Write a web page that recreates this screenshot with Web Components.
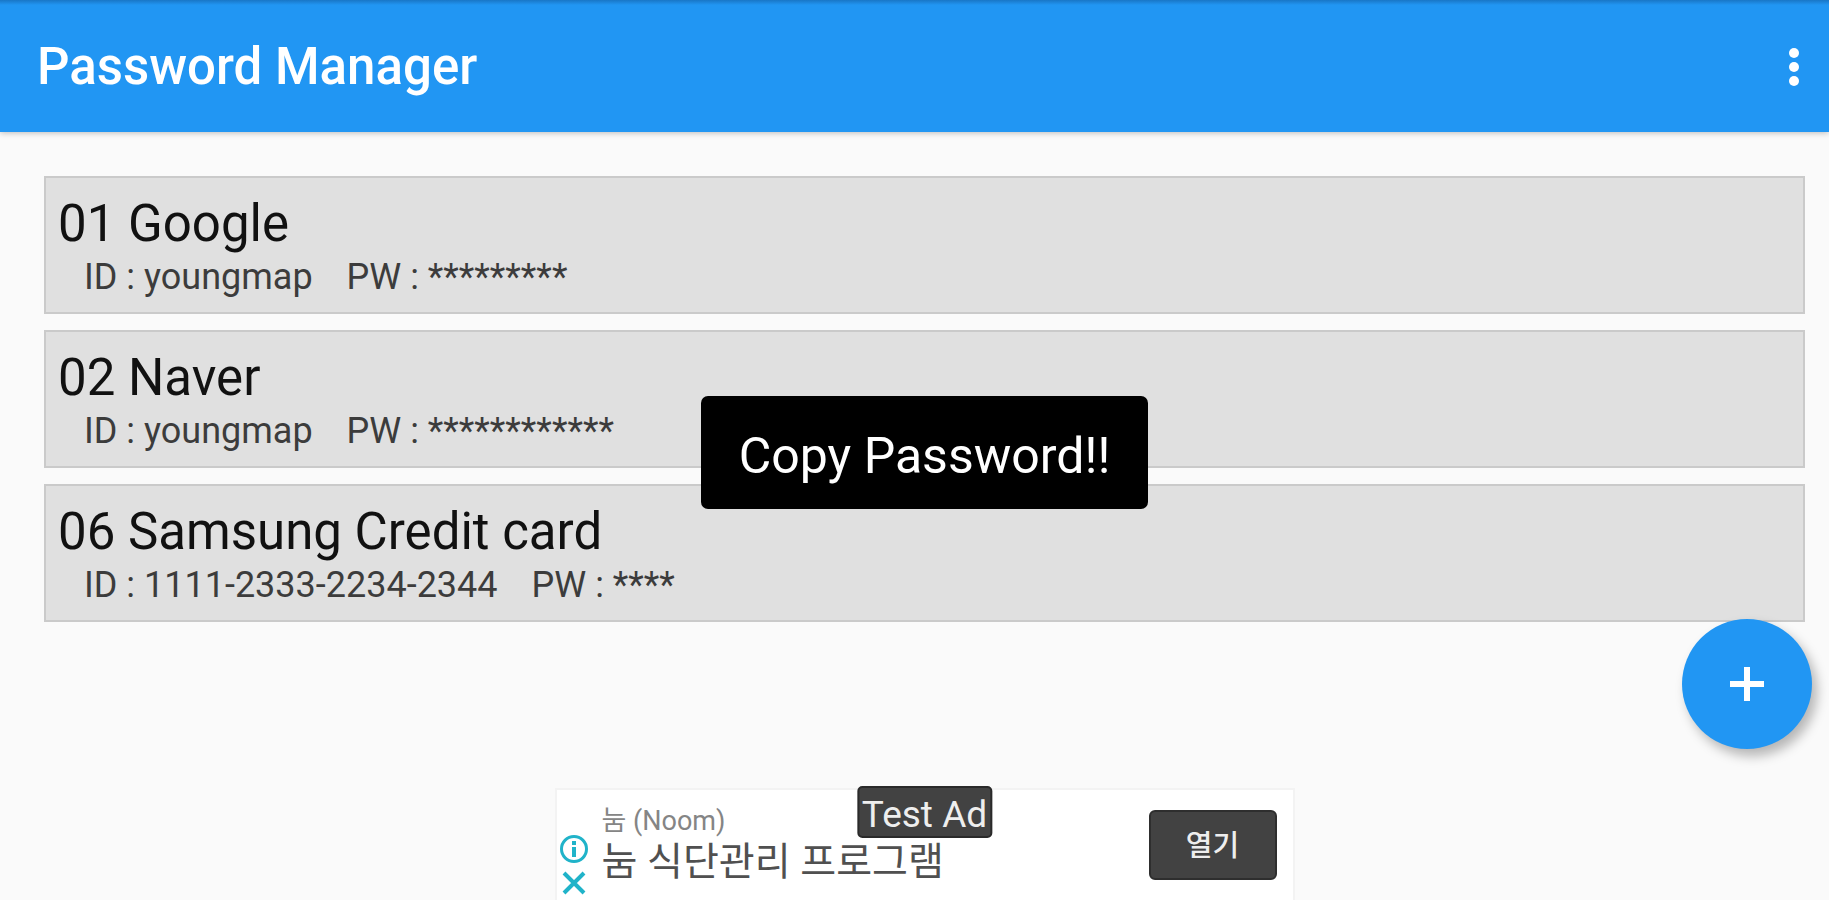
<!DOCTYPE html>
<html lang="ko">
<head>
  <meta charset="utf-8">
  <meta name="viewport" content="width=device-width, initial-scale=1">
  <title>Password Manager</title>
  <style>
    body {
      margin: 0;
      background-color: #fafafa;
      font-family: Roboto, "Noto Sans CJK KR", sans-serif;
    }
  </style>
</head>
<body>
  <pm-app>
    <pm-app-bar slot="bar">Password Manager</pm-app-bar>
    <pm-entry>
      <span slot="title">01 Google</span>
      <span slot="id">youngmap</span>
      <span slot="pw">*********</span>
    </pm-entry>
    <pm-entry>
      <span slot="title">02 Naver</span>
      <span slot="id">youngmap</span>
      <span slot="pw">************</span>
    </pm-entry>
    <pm-entry>
      <span slot="title">06 Samsung Credit card</span>
      <span slot="id">1111-2333-2234-2344</span>
      <span slot="pw">****</span>
    </pm-entry>
    <pm-toast slot="toast">Copy Password!!</pm-toast>
    <pm-ad slot="ad">
      <span slot="brand">눔 (Noom)</span>
      <span slot="headline">눔 식단관리 프로그램</span>
      <span slot="action">열기</span>
    </pm-ad>
    <pm-fab slot="fab"></pm-fab>
  </pm-app>

  <script>
    class App extends HTMLElement {
      constructor() {
        super()
        this.attachShadow({ mode: 'open' })
        this.shadowRoot.innerHTML = /* html */ `
          <style>
            :host {
              display: flex;
              flex-direction: column;
              height: 100vh;
              overflow: hidden;
            }
            main {
              position: relative;
              flex: 1;
              min-height: 0;
              display: flex;
              flex-direction: column;
              gap: 16px;
              padding: 44px 24px 0 44px;
            }
            .toast {
              position: absolute;
              top: 264px;
              left: 44px;
              right: 24px;
              display: flex;
              justify-content: center;
              pointer-events: none;
            }
            footer {
              display: flex;
              justify-content: center;
              padding: 0 24px 0 44px;
            }
            .fab {
              position: fixed;
              right: 17px;
              bottom: 151px;
            }
          </style>
          <slot name="bar"></slot>
          <main>
            <slot></slot>
            <div class="toast"><slot name="toast"></slot></div>
          </main>
          <footer><slot name="ad"></slot></footer>
          <div class="fab"><slot name="fab"></slot></div>
        `;
      }
    }

    class AppBar extends HTMLElement {
      constructor() {
        super()
        this.attachShadow({ mode: 'open' })
        this.shadowRoot.innerHTML = /* html */ `
          <style>
            :host {
              display: block;
              background: linear-gradient(#1976c6, #2196f3 5px);
              box-shadow: 0 1px 6px rgba(0,0,0,0.25);
            }
            header {
              display: flex;
              align-items: center;
              justify-content: space-between;
              height: 130px;
              padding: 2px 17px 0 37px;
            }
            h1 {
              margin: 0;
              font-size: 51px;
              line-height: 60px;
              font-weight: 500;
              color: #fff;
            }
            button {
              display: flex;
              padding: 0;
              border: 0;
              background: none;
              cursor: pointer;
            }
          </style>
          <header>
            <h1><slot></slot></h1>
            <button type="button" aria-label="More options">
              <svg width="36" height="60" viewBox="0 0 36 60" fill="#fff">
                <circle cx="18" cy="16" r="5" />
                <circle cx="18" cy="30" r="5" />
                <circle cx="18" cy="44" r="5" />
              </svg>
            </button>
          </header>
        `;
      }
    }

    class Entry extends HTMLElement {
      constructor() {
        super()
        this.attachShadow({ mode: 'open' })
        this.shadowRoot.innerHTML = /* html */ `
          <style>
            :host {
              display: block;
            }
            article {
              padding: 16px 12px 12px;
              background-color: #e0e0e0;
              border: 2px solid #cacaca;
            }
            h2 {
              margin: 0;
              font-size: 51px;
              line-height: 60px;
              font-weight: 400;
              color: #111;
            }
            p {
              display: flex;
              gap: 34px;
              margin: 0;
              padding-left: 26px;
              font-size: 36px;
              line-height: 46px;
              color: #3c3c3c;
            }
          </style>
          <article>
            <h2><slot name="title"></slot></h2>
            <p>
              <span>ID : <slot name="id"></slot></span>
              <span>PW : <slot name="pw"></slot></span>
            </p>
          </article>
        `;
      }
    }

    class Toast extends HTMLElement {
      constructor() {
        super()
        this.attachShadow({ mode: 'open' })
        this.shadowRoot.innerHTML = /* html */ `
          <style>
            :host {
              display: block;
              padding: 30px 38px 23px;
              border-radius: 7px;
              background-color: #000;
              color: #fff;
              font-size: 50px;
              line-height: 60px;
            }
          </style>
          <div role="status"><slot></slot></div>
        `;
      }
    }

    class Fab extends HTMLElement {
      constructor() {
        super()
        this.attachShadow({ mode: 'open' })
        this.shadowRoot.innerHTML = /* html */ `
          <style>
            :host {
              display: block;
            }
            button {
              display: flex;
              align-items: center;
              justify-content: center;
              width: 130px;
              height: 130px;
              padding: 0;
              border: 0;
              border-radius: 50%;
              background-color: #2196f3;
              box-shadow: 5px 7px 12px rgba(0,0,0,0.28);
              cursor: pointer;
            }
          </style>
          <button type="button" aria-label="Add">
            <svg width="36" height="36" viewBox="0 0 36 36" stroke="#fff" stroke-width="6">
              <path d="M18 1v34M1 18h34" />
            </svg>
          </button>
        `;
      }
    }

    class Ad extends HTMLElement {
      constructor() {
        super()
        this.attachShadow({ mode: 'open' })
        this.shadowRoot.innerHTML = /* html */ `
          <style>
            :host {
              position: relative;
              display: block;
              width: 42%;
              min-width: 740px;
              box-sizing: border-box;
              background-color: #fff;
              border: 2px solid #f3f3f3;
              border-bottom: 0;
            }
            .banner {
              display: flex;
              align-items: flex-start;
              height: 110px;
            }
            .choices {
              display: flex;
              flex-direction: column;
              align-items: center;
              gap: 7px;
              padding: 44px 13px 0 2px;
            }
            .choices button {
              display: flex;
              padding: 0;
              border: 0;
              background: none;
              cursor: pointer;
            }
            .text {
              flex: 1;
              padding-top: 15px;
            }
            .brand {
              margin: 0;
              font-size: 27px;
              line-height: 32px;
              color: #858585;
            }
            .headline {
              margin: 0;
              font-size: 39px;
              line-height: 50px;
              color: #505050;
            }
            .action {
              width: 128px;
              height: 70px;
              margin: 20px 16px 0 0;
              padding: 0 0 4px;
              border: 2px solid #2e2e2e;
              border-radius: 6px;
              background-color: #424242;
              color: #eee;
              font-family: inherit;
              font-size: 29px;
              font-weight: 500;
              cursor: pointer;
            }
            .label {
              position: absolute;
              top: -4px;
              left: 50%;
              transform: translateX(-50%);
              padding: 7px 3px 1px;
              border: 2px solid #2a2a2a;
              border-radius: 5px;
              background-color: #424242;
              color: #eee;
              font-size: 37px;
              line-height: 40px;
              white-space: nowrap;
            }
          </style>
          <div class="banner">
            <div class="choices">
              <button type="button" aria-label="Ad info">
                <svg width="30" height="30" viewBox="0 0 30 30" fill="none" stroke="#20b3c9">
                  <circle cx="15" cy="15" r="12.5" stroke-width="3" />
                  <path d="M15 7v4M15 13v10" stroke-width="4" />
                </svg>
              </button>
              <button type="button" aria-label="Close ad">
                <svg width="24" height="24" viewBox="0 0 24 24" fill="none" stroke="#20b3c9" stroke-width="4">
                  <path d="M2 2l20 20M22 2L2 22" />
                </svg>
              </button>
            </div>
            <div class="text">
              <p class="brand"><slot name="brand"></slot></p>
              <p class="headline"><slot name="headline"></slot></p>
            </div>
            <button class="action" type="button"><slot name="action"></slot></button>
          </div>
          <span class="label">Test Ad</span>
        `;
      }
    }

    customElements.define('pm-app', App);
    customElements.define('pm-app-bar', AppBar);
    customElements.define('pm-entry', Entry);
    customElements.define('pm-toast', Toast);
    customElements.define('pm-fab', Fab);
    customElements.define('pm-ad', Ad);
  </script>
</body>
</html>
